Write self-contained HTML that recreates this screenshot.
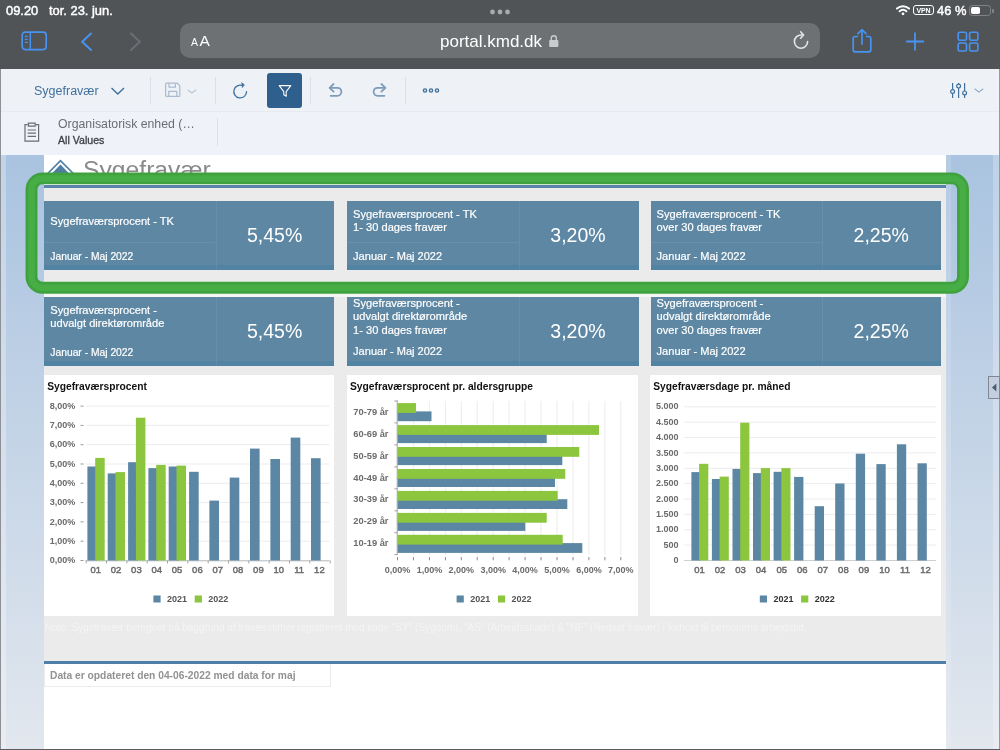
<!DOCTYPE html>
<html><head><meta charset="utf-8"><title>Sygefravær</title><style>
*{margin:0;padding:0;box-sizing:border-box}
html,body{width:1000px;height:750px;overflow:hidden;background:#fff;font-family:"Liberation Sans",sans-serif}
.abs{position:absolute}
#root{position:absolute;left:0;top:0;width:1000px;height:750px;will-change:transform;opacity:0.999}
#top{left:0;top:0;width:1000px;height:69px;background:#505457}
#url{left:180px;top:23px;width:640px;height:35px;border-radius:10px;background:#6d7174}
.t{position:absolute;white-space:nowrap;line-height:1}
#tb1{left:0;top:69px;width:1000px;height:43px;background:#eef2f7;border-bottom:1px solid #e6ebf1}
#tb2{left:0;top:112px;width:1000px;height:43px;background:#eff3f9}
.vd{position:absolute;width:1px;background:#dbe0e7}
#lstrip{left:0;top:155px;width:44px;height:595px;background:linear-gradient(#a9c3e0,#e2e7ee)}
#rstrip{left:946px;top:155px;width:54px;height:595px;background:linear-gradient(#a9c3e0,#e2e7ee)}
#content{left:44px;top:155px;width:902px;height:595px;background:#fff}
#gray{left:44px;top:187.8px;width:902px;height:475px;background:#ebebeb}
.tile{position:absolute;background:#5d87a3;color:#fff;font-size:11px}
.tile .t{color:#fff}
.val{position:absolute;color:#fff;font-size:19.5px;white-space:nowrap;line-height:1;text-align:center}
.panel{position:absolute;background:#fff}
.ct{position:absolute;font-weight:bold;font-size:10.5px;color:#111;white-space:nowrap;line-height:1}
#green{left:25.5px;top:172.5px;width:943.5px;height:121px;border:12px solid #42a842;border-radius:17px}
</style></head><body>
<div id="root">
<div id="top" class="abs">
<div class="t" style="left:6px;top:10.5px;transform:translate(0,-50%);font-size:12.9px;color:#fff;font-weight:normal;-webkit-text-stroke:0.45px #fff">09.20</div>
<div class="t" style="left:49px;top:10.5px;transform:translate(0,-50%);font-size:12.9px;color:#fff;font-weight:normal;-webkit-text-stroke:0.45px #fff">tor. 23. jun.</div>
<svg class="abs" style="left:486px;top:8px" width="28" height="8"><circle cx="6.5" cy="4" r="2.4" fill="#a9abad"/><circle cx="14" cy="4" r="2.4" fill="#a9abad"/><circle cx="21.5" cy="4" r="2.4" fill="#a9abad"/></svg>
<div id="url" class="abs"></div>
<div class="t" style="left:191px;top:42px;transform:translate(0,-50%);font-size:10.5px;color:#fff;font-weight:normal;">A</div>
<div class="t" style="left:199.5px;top:40.8px;transform:translate(0,-50%);font-size:15.5px;color:#fff;font-weight:normal;">A</div>
<div class="t" style="left:440px;top:40.5px;transform:translate(0,-50%);font-size:17px;color:#fff;font-weight:normal;">portal.kmd.dk</div>
<svg class="abs" style="left:548px;top:34px" width="12" height="14" viewBox="0 0 12 14"><rect x="1.2" y="6" width="9.2" height="7" rx="1" fill="#c9cbcc"/><path d="M3.3 6.2V4.2a2.5 2.5 0 0 1 5 0v2" fill="none" stroke="#c9cbcc" stroke-width="1.4"/></svg>
<svg class="abs" style="left:790px;top:30px" width="22" height="22" viewBox="0 0 22 22"><path d="M17.6 11.6a6.6 6.6 0 1 1-6.6-6.6h1.2" fill="none" stroke="#e4e5e6" stroke-width="1.6" stroke-linecap="round"/><path d="M10.6 1.8l3 3.2-3 3.2" fill="none" stroke="#e4e5e6" stroke-width="1.6" stroke-linecap="round" stroke-linejoin="round"/></svg>
<svg class="abs" style="left:21px;top:31px" width="28" height="20" viewBox="0 0 28 20"><rect x="1.2" y="1.2" width="24" height="17.4" rx="3" fill="none" stroke="#4893f1" stroke-width="1.7"/><path d="M9.3 1.2v17.4" stroke="#4893f1" stroke-width="1.5"/><path d="M3.8 5.4h3M3.8 8.4h3M3.8 11.4h3" stroke="#4893f1" stroke-width="1.2"/></svg>
<svg class="abs" style="left:78px;top:31px" width="18" height="22" viewBox="0 0 18 22"><path d="M13 2.5L4.2 10.8 13 19" fill="none" stroke="#4893f1" stroke-width="2" stroke-linecap="round" stroke-linejoin="round"/></svg>
<svg class="abs" style="left:126px;top:31px" width="18" height="22" viewBox="0 0 18 22"><path d="M5 2.5l8.8 8.3L5 19" fill="none" stroke="#6b6f73" stroke-width="2" stroke-linecap="round" stroke-linejoin="round"/></svg>
<svg class="abs" style="left:850px;top:27px" width="24" height="28" viewBox="0 0 24 28"><path d="M8 9.5H5.2a2 2 0 0 0-2 2v11.3a2 2 0 0 0 2 2h13.6a2 2 0 0 0 2-2V11.5a2 2 0 0 0-2-2H16" fill="none" stroke="#4893f1" stroke-width="1.7"/><path d="M12 17V3M8 6.6l4-4 4 4" fill="none" stroke="#4893f1" stroke-width="1.7" stroke-linecap="round" stroke-linejoin="round"/></svg>
<svg class="abs" style="left:904px;top:31px" width="22" height="22" viewBox="0 0 22 22"><path d="M11 2.2v16.6M2.7 10.5h16.6" stroke="#4893f1" stroke-width="1.8" stroke-linecap="round"/></svg>
<svg class="abs" style="left:957px;top:31px" width="23" height="22" viewBox="0 0 23 22"><g fill="none" stroke="#4893f1" stroke-width="1.6"><rect x="1.2" y="1.2" width="8.3" height="8" rx="1.5"/><rect x="12.6" y="1.2" width="8.3" height="8" rx="1.5"/><rect x="1.2" y="12" width="8.3" height="8" rx="1.5"/><rect x="12.6" y="12" width="8.3" height="8" rx="1.5"/></g></svg>
<svg class="abs" style="left:895px;top:4px" width="16" height="12" viewBox="0 0 16 12"><g fill="none" stroke="#fff" stroke-width="2" stroke-linecap="round"><path d="M2 4.6a8.8 8.8 0 0 1 12 0"/><path d="M4.6 7.3a5.2 5.2 0 0 1 6.8 0"/></g><circle cx="8" cy="9.8" r="1.4" fill="#fff"/></svg>
<div class="abs" style="left:913px;top:5px;width:21px;height:10px;border:1.2px solid #fff;border-radius:3px"></div>
<div class="t" style="left:923.5px;top:10.3px;transform:translate(-50%,-50%);font-size:7px;color:#fff;font-weight:bold;letter-spacing:-0.2px">VPN</div>
<div class="t" style="left:937px;top:10.5px;transform:translate(0,-50%);font-size:12.9px;color:#fff;font-weight:normal;-webkit-text-stroke:0.45px #fff">46 %</div>
<div class="abs" style="left:969px;top:5px;width:22px;height:10.5px;border:1px solid #808386;border-radius:3.2px"></div>
<div class="abs" style="left:970.5px;top:6.5px;width:9.5px;height:7.5px;background:#fff;border-radius:1.8px"></div>
<div class="abs" style="left:992px;top:8.5px;width:1.6px;height:4px;background:#808386;border-radius:0 1px 1px 0"></div>
</div>
<div id="tb1" class="abs"></div><div id="tb2" class="abs"></div>
<div class="t" style="left:34px;top:91px;transform:translate(0,-50%);font-size:12.5px;color:#41709c;font-weight:normal;">Sygefravær</div>
<svg class="abs" style="left:110px;top:86px" width="16" height="10"><path d="M1.5 2l6.3 6L14 2" fill="none" stroke="#41709c" stroke-width="1.4"/></svg>
<div class="vd" style="left:150px;top:77px;height:27px"></div>
<div class="vd" style="left:215px;top:77px;height:27px"></div>
<div class="vd" style="left:310px;top:77px;height:27px"></div>
<div class="vd" style="left:405px;top:77px;height:27px"></div>
<div class="vd" style="left:217px;top:118px;height:28px"></div>
<svg class="abs" style="left:164px;top:82px" width="18" height="16" viewBox="0 0 18 16"><g fill="none" stroke="#a9bbcf" stroke-width="1.2" stroke-linejoin="round"><path d="M2.6 1.2h10.6l2.6 2.4v9.8a1 1 0 0 1-1 1H2.6a1 1 0 0 1-1-1V2.2a1 1 0 0 1 1-1z"/><path d="M5 1.4v3.8h6.4V1.4"/><path d="M4.8 14.2V9.4h8v4.8"/></g></svg>
<svg class="abs" style="left:186px;top:88px" width="12" height="8"><path d="M1.6 1.8l4.3 3.3 4.3-3.3" fill="none" stroke="#b9c6d6" stroke-width="1.2"/></svg>
<svg class="abs" style="left:231px;top:81px" width="20" height="20" viewBox="0 0 20 20"><path d="M15.6 10.6a6.4 6.4 0 1 1-4-6" fill="none" stroke="#41709c" stroke-width="1.3" stroke-linecap="round"/><path d="M10.4 1.6l2.9 2.2-2.2 2.9" fill="#41709c" stroke="#41709c" stroke-width="0.8" stroke-linejoin="round"/></svg>
<div class="abs" style="left:267px;top:73px;width:35px;height:35px;border-radius:3px;background:#2f5f8d"></div>
<svg class="abs" style="left:277px;top:83px" width="16" height="16" viewBox="0 0 16 16"><path d="M2.2 2.6h11.6L9.2 8.6v4.6L6.8 11.8V8.6z" fill="none" stroke="#fff" stroke-width="1.05" stroke-linejoin="round"/></svg>
<svg class="abs" style="left:327px;top:82px" width="18" height="17" viewBox="0 0 18 17"><g fill="none" stroke="#7d9bbb" stroke-width="1.75" stroke-linecap="round" stroke-linejoin="round"><path d="M6.6 2L2.6 5.8l4 3.8"/><path d="M3 5.8h7.4a4 4 0 0 1 0 8H3.6"/></g></svg>
<svg class="abs" style="left:370px;top:82px" width="18" height="17" viewBox="0 0 18 17"><g fill="none" stroke="#7d9bbb" stroke-width="1.75" stroke-linecap="round" stroke-linejoin="round"><path d="M11.4 2l4 3.8-4 3.8"/><path d="M15 5.8H7.6a4 4 0 0 0 0 8h6.8"/></g></svg>
<svg class="abs" style="left:421px;top:86px" width="20" height="9"><g fill="none" stroke="#41709c" stroke-width="1.4"><circle cx="4" cy="4.5" r="1.6"/><circle cx="10" cy="4.5" r="1.6"/><circle cx="16" cy="4.5" r="1.6"/></g></svg>
<svg class="abs" style="left:949px;top:82px" width="20" height="17" viewBox="0 0 20 17"><g fill="none" stroke="#41709c" stroke-width="1.2"><path d="M3.6 1v6.6M3.6 11.4V16M9.6 1v1.2M9.6 6v10M15.6 1v8M15.6 12.8V16"/><circle cx="3.6" cy="9.5" r="1.9"/><circle cx="9.6" cy="4.1" r="1.9"/><circle cx="15.6" cy="10.9" r="1.9"/></g></svg>
<svg class="abs" style="left:973px;top:87px" width="12" height="8"><path d="M1.6 1.8l4.3 3.3 4.3-3.3" fill="none" stroke="#8fa7c2" stroke-width="1.1"/></svg>
<svg class="abs" style="left:23px;top:121px" width="18" height="22" viewBox="0 0 18 22"><g fill="none" stroke="#6a6d70" stroke-width="1.2"><path d="M4.6 3.6H2v16.6h13.6V3.6H13"/><path d="M5.4 2.2h6.8v3H5.4z"/><path d="M4.6 9h8.4M4.6 12.2h8.4M4.6 15.4h8.4"/></g></svg>
<div class="t" style="left:58px;top:123.7px;transform:translate(0,-50%);font-size:12.3px;color:#6a6d70;font-weight:normal;">Organisatorisk enhed (…</div>
<div class="t" style="left:58px;top:139.8px;transform:translate(0,-50%);font-size:10.6px;color:#3c3f42;font-weight:normal;-webkit-text-stroke:0.3px #3c3f42">All Values</div>
<div id="lstrip" class="abs"></div><div id="rstrip" class="abs"></div><div id="content" class="abs"></div>
<div class="abs" style="left:0;top:69px;width:1px;height:681px;background:#8d9196"></div>
<div class="abs" style="left:1px;top:155px;width:5px;height:595px;background:rgba(255,255,255,.28)"></div>
<div class="abs" style="left:998.8px;top:69px;width:1.2px;height:681px;background:#96999d"></div>
<div class="abs" style="left:993px;top:155px;width:5.8px;height:595px;background:rgba(255,255,255,.25)"></div>
<div class="abs" style="left:946px;top:155px;width:4.5px;height:595px;background:rgba(255,255,255,.14)"></div>
<div class="t" style="left:83px;top:170.2px;transform:translate(0,-50%);font-size:24.7px;color:#8a8a8a;font-weight:normal;">Sygefravær</div>
<svg class="abs" style="left:44px;top:158px" width="34" height="20" viewBox="0 0 34 20"><path d="M2.2 17L16.5 2.7 30.8 17" fill="none" stroke="#4d7ea3" stroke-width="1.7"/><path d="M5.5 18L16.5 6.6 27.5 18z" fill="#4d7ea3"/></svg>
<div class="abs" style="left:44px;top:184.8px;width:902px;height:2.9px;background:#5a83aa"></div>
<div id="gray" class="abs"></div>
<div class="abs" style="left:44px;top:293px;width:902px;height:3.5px;background:#f6f6f6"></div>
<div class="tile" style="left:44.3px;top:200.6px;width:290.1px;height:69.1px"></div>
<div class="abs" style="left:215.8px;top:200.6px;width:1px;height:69.1px;background:rgba(255,255,255,.07)"></div>
<div class="abs" style="left:44.3px;top:241.6px;width:171px;height:1px;background:rgba(255,255,255,.08)"></div>
<div class="abs" style="left:44.3px;top:265.09999999999997px;width:290.1px;height:4.6px;background:rgba(50,120,165,.22)"></div>
<div class="t" style="left:50.3px;top:222.2px;transform:translate(0,-50%);font-size:11.1px;color:#fff;font-weight:normal;-webkit-text-stroke:0.2px #fff">Sygefraværsprocent - TK</div>
<div class="t" style="left:50.3px;top:256.8px;transform:translate(0,-50%);font-size:10.3px;color:#fff;font-weight:normal;-webkit-text-stroke:0.2px #fff">Januar - Maj 2022</div>
<div class="t" style="left:274.6px;top:236px;transform:translate(-50%,-50%);font-size:19.5px;color:#fff;font-weight:normal;">5,45%</div>
<div class="tile" style="left:347.1px;top:200.6px;width:291.5px;height:69.1px"></div>
<div class="abs" style="left:518.6px;top:200.6px;width:1px;height:69.1px;background:rgba(255,255,255,.07)"></div>
<div class="abs" style="left:347.1px;top:241.6px;width:171px;height:1px;background:rgba(255,255,255,.08)"></div>
<div class="abs" style="left:347.1px;top:265.09999999999997px;width:291.5px;height:4.6px;background:rgba(50,120,165,.22)"></div>
<div class="t" style="left:353.1px;top:214.9px;transform:translate(0,-50%);font-size:11.1px;color:#fff;font-weight:normal;-webkit-text-stroke:0.2px #fff">Sygefraværsprocent - TK</div>
<div class="t" style="left:353.1px;top:228.2px;transform:translate(0,-50%);font-size:11.1px;color:#fff;font-weight:normal;-webkit-text-stroke:0.2px #fff">1- 30 dages fravær</div>
<div class="t" style="left:353.1px;top:256.5px;transform:translate(0,-50%);font-size:11.05px;color:#fff;font-weight:normal;-webkit-text-stroke:0.2px #fff">Januar - Maj 2022</div>
<div class="t" style="left:578px;top:236px;transform:translate(-50%,-50%);font-size:19.5px;color:#fff;font-weight:normal;">3,20%</div>
<div class="tile" style="left:650.6px;top:200.6px;width:290.6px;height:69.1px"></div>
<div class="abs" style="left:822.1px;top:200.6px;width:1px;height:69.1px;background:rgba(255,255,255,.07)"></div>
<div class="abs" style="left:650.6px;top:241.6px;width:171px;height:1px;background:rgba(255,255,255,.08)"></div>
<div class="abs" style="left:650.6px;top:265.09999999999997px;width:290.6px;height:4.6px;background:rgba(50,120,165,.22)"></div>
<div class="t" style="left:656.6px;top:214.9px;transform:translate(0,-50%);font-size:11.1px;color:#fff;font-weight:normal;-webkit-text-stroke:0.2px #fff">Sygefraværsprocent - TK</div>
<div class="t" style="left:656.6px;top:228.2px;transform:translate(0,-50%);font-size:11.1px;color:#fff;font-weight:normal;-webkit-text-stroke:0.2px #fff">over 30 dages fravær</div>
<div class="t" style="left:656.6px;top:256.5px;transform:translate(0,-50%);font-size:11.05px;color:#fff;font-weight:normal;-webkit-text-stroke:0.2px #fff">Januar - Maj 2022</div>
<div class="t" style="left:881.2px;top:236px;transform:translate(-50%,-50%);font-size:19.5px;color:#fff;font-weight:normal;">2,25%</div>
<div class="tile" style="left:44.3px;top:297.1px;width:290.1px;height:68.6px"></div>
<div class="abs" style="left:215.8px;top:297.1px;width:1px;height:68.6px;background:rgba(255,255,255,.07)"></div>
<div class="abs" style="left:44.3px;top:361.1px;width:290.1px;height:4.6px;background:rgba(50,120,165,.22)"></div>
<div class="t" style="left:50.3px;top:310.9px;transform:translate(0,-50%);font-size:11.1px;color:#fff;font-weight:normal;-webkit-text-stroke:0.2px #fff">Sygefraværsprocent -</div>
<div class="t" style="left:50.3px;top:324.3px;transform:translate(0,-50%);font-size:11.1px;color:#fff;font-weight:normal;-webkit-text-stroke:0.2px #fff">udvalgt direktørområde</div>
<div class="t" style="left:50.3px;top:352.6px;transform:translate(0,-50%);font-size:10.3px;color:#fff;font-weight:normal;-webkit-text-stroke:0.2px #fff">Januar - Maj 2022</div>
<div class="t" style="left:274.6px;top:331.5px;transform:translate(-50%,-50%);font-size:19.5px;color:#fff;font-weight:normal;">5,45%</div>
<div class="tile" style="left:347.1px;top:297.1px;width:291.5px;height:68.6px"></div>
<div class="abs" style="left:518.6px;top:297.1px;width:1px;height:68.6px;background:rgba(255,255,255,.07)"></div>
<div class="abs" style="left:347.1px;top:361.1px;width:291.5px;height:4.6px;background:rgba(50,120,165,.22)"></div>
<div class="t" style="left:353.1px;top:303.9px;transform:translate(0,-50%);font-size:11.1px;color:#fff;font-weight:normal;-webkit-text-stroke:0.2px #fff">Sygefraværsprocent -</div>
<div class="t" style="left:353.1px;top:317.4px;transform:translate(0,-50%);font-size:11.1px;color:#fff;font-weight:normal;-webkit-text-stroke:0.2px #fff">udvalgt direktørområde</div>
<div class="t" style="left:353.1px;top:331.0px;transform:translate(0,-50%);font-size:11.1px;color:#fff;font-weight:normal;-webkit-text-stroke:0.2px #fff">1- 30 dages fravær</div>
<div class="t" style="left:353.1px;top:352.0px;transform:translate(0,-50%);font-size:11.05px;color:#fff;font-weight:normal;-webkit-text-stroke:0.2px #fff">Januar - Maj 2022</div>
<div class="t" style="left:578px;top:331.5px;transform:translate(-50%,-50%);font-size:19.5px;color:#fff;font-weight:normal;">3,20%</div>
<div class="tile" style="left:650.6px;top:297.1px;width:290.6px;height:68.6px"></div>
<div class="abs" style="left:822.1px;top:297.1px;width:1px;height:68.6px;background:rgba(255,255,255,.07)"></div>
<div class="abs" style="left:650.6px;top:361.1px;width:290.6px;height:4.6px;background:rgba(50,120,165,.22)"></div>
<div class="t" style="left:656.6px;top:303.9px;transform:translate(0,-50%);font-size:11.1px;color:#fff;font-weight:normal;-webkit-text-stroke:0.2px #fff">Sygefraværsprocent -</div>
<div class="t" style="left:656.6px;top:317.4px;transform:translate(0,-50%);font-size:11.1px;color:#fff;font-weight:normal;-webkit-text-stroke:0.2px #fff">udvalgt direktørområde</div>
<div class="t" style="left:656.6px;top:331.0px;transform:translate(0,-50%);font-size:11.1px;color:#fff;font-weight:normal;-webkit-text-stroke:0.2px #fff">over 30 dages fravær</div>
<div class="t" style="left:656.6px;top:352.0px;transform:translate(0,-50%);font-size:11.05px;color:#fff;font-weight:normal;-webkit-text-stroke:0.2px #fff">Januar - Maj 2022</div>
<div class="t" style="left:881.2px;top:331.5px;transform:translate(-50%,-50%);font-size:19.5px;color:#fff;font-weight:normal;">2,25%</div>
<div class="panel" style="left:44.2px;top:374.8px;width:290.1px;height:240.8px"></div>
<div class="panel" style="left:347px;top:374.8px;width:290.7px;height:240.8px"></div>
<div class="panel" style="left:650px;top:374.8px;width:290.6px;height:240.8px"></div>
<div class="t" style="left:47.2px;top:386.6px;transform:translate(0,-50%);font-size:10.25px;color:#111;font-weight:bold;">Sygefraværsprocent</div>
<div class="t" style="left:350px;top:386.6px;transform:translate(0,-50%);font-size:10.25px;color:#111;font-weight:bold;">Sygefraværsprocent pr. aldersgruppe</div>
<div class="t" style="left:653.2px;top:386.6px;transform:translate(0,-50%);font-size:10.25px;color:#111;font-weight:bold;">Sygefraværsdage pr. måned</div>
<svg class="abs" style="left:0;top:0" width="1000" height="750" font-family="Liberation Sans, sans-serif"><path d="M80.5 560.5H83.5" stroke="#999" stroke-width="1"/><text x="75.2" y="563.1" text-anchor="end" font-size="9" fill="#6b6b6b" font-weight="bold">0,00%</text><path d="M86 541.2H329.5" stroke="#ececec" stroke-width="1"/><path d="M80.5 541.2H83.5" stroke="#999" stroke-width="1"/><text x="75.2" y="543.8000000000001" text-anchor="end" font-size="9" fill="#6b6b6b" font-weight="bold">1,00%</text><path d="M86 521.9H329.5" stroke="#ececec" stroke-width="1"/><path d="M80.5 521.9H83.5" stroke="#999" stroke-width="1"/><text x="75.2" y="524.5" text-anchor="end" font-size="9" fill="#6b6b6b" font-weight="bold">2,00%</text><path d="M86 502.6H329.5" stroke="#ececec" stroke-width="1"/><path d="M80.5 502.6H83.5" stroke="#999" stroke-width="1"/><text x="75.2" y="505.20000000000005" text-anchor="end" font-size="9" fill="#6b6b6b" font-weight="bold">3,00%</text><path d="M86 483.3H329.5" stroke="#ececec" stroke-width="1"/><path d="M80.5 483.3H83.5" stroke="#999" stroke-width="1"/><text x="75.2" y="485.90000000000003" text-anchor="end" font-size="9" fill="#6b6b6b" font-weight="bold">4,00%</text><path d="M86 464.0H329.5" stroke="#ececec" stroke-width="1"/><path d="M80.5 464.0H83.5" stroke="#999" stroke-width="1"/><text x="75.2" y="466.6" text-anchor="end" font-size="9" fill="#6b6b6b" font-weight="bold">5,00%</text><path d="M86 444.7H329.5" stroke="#ececec" stroke-width="1"/><path d="M80.5 444.7H83.5" stroke="#999" stroke-width="1"/><text x="75.2" y="447.3" text-anchor="end" font-size="9" fill="#6b6b6b" font-weight="bold">6,00%</text><path d="M86 425.4H329.5" stroke="#ececec" stroke-width="1"/><path d="M80.5 425.4H83.5" stroke="#999" stroke-width="1"/><text x="75.2" y="428.0" text-anchor="end" font-size="9" fill="#6b6b6b" font-weight="bold">7,00%</text><path d="M86 406.1H329.5" stroke="#ececec" stroke-width="1"/><path d="M80.5 406.1H83.5" stroke="#999" stroke-width="1"/><text x="75.2" y="408.70000000000005" text-anchor="end" font-size="9" fill="#6b6b6b" font-weight="bold">8,00%</text><path d="M85.5 560.8H329.5" stroke="#b4b7ba" stroke-width="1"/><path d="M86.2 560.5V563.5" stroke="#a6a6a6" stroke-width="1"/><path d="M106.5 560.5V563.5" stroke="#a6a6a6" stroke-width="1"/><path d="M126.9 560.5V563.5" stroke="#a6a6a6" stroke-width="1"/><path d="M147.2 560.5V563.5" stroke="#a6a6a6" stroke-width="1"/><path d="M167.5 560.5V563.5" stroke="#a6a6a6" stroke-width="1"/><path d="M187.8 560.5V563.5" stroke="#a6a6a6" stroke-width="1"/><path d="M208.2 560.5V563.5" stroke="#a6a6a6" stroke-width="1"/><path d="M228.5 560.5V563.5" stroke="#a6a6a6" stroke-width="1"/><path d="M248.8 560.5V563.5" stroke="#a6a6a6" stroke-width="1"/><path d="M269.2 560.5V563.5" stroke="#a6a6a6" stroke-width="1"/><path d="M289.5 560.5V563.5" stroke="#a6a6a6" stroke-width="1"/><path d="M309.8 560.5V563.5" stroke="#a6a6a6" stroke-width="1"/><path d="M330.2 560.5V563.5" stroke="#a6a6a6" stroke-width="1"/><rect x="87.4" y="466.5" width="9.8" height="94.0" fill="#5b86a4"/><rect x="95.2" y="457.9" width="9.5" height="102.6" fill="#8cc63e"/><text stroke="#6b6b6b" stroke-width="0.45" x="95.8" y="573.3" text-anchor="middle" font-size="9.5" fill="#6b6b6b" font-weight="normal">01</text><rect x="107.7" y="473.4" width="9.8" height="87.1" fill="#5b86a4"/><rect x="115.5" y="472.1" width="9.5" height="88.4" fill="#8cc63e"/><text stroke="#6b6b6b" stroke-width="0.45" x="116.1" y="573.3" text-anchor="middle" font-size="9.5" fill="#6b6b6b" font-weight="normal">02</text><rect x="128.1" y="462.2" width="9.8" height="98.3" fill="#5b86a4"/><rect x="135.9" y="417.7" width="9.5" height="142.8" fill="#8cc63e"/><text stroke="#6b6b6b" stroke-width="0.45" x="136.4" y="573.3" text-anchor="middle" font-size="9.5" fill="#6b6b6b" font-weight="normal">03</text><rect x="148.4" y="468.1" width="9.8" height="92.4" fill="#5b86a4"/><rect x="156.2" y="464.9" width="9.5" height="95.6" fill="#8cc63e"/><text stroke="#6b6b6b" stroke-width="0.45" x="156.8" y="573.3" text-anchor="middle" font-size="9.5" fill="#6b6b6b" font-weight="normal">04</text><rect x="168.7" y="466.5" width="9.8" height="94.0" fill="#5b86a4"/><rect x="176.5" y="465.6" width="9.5" height="94.9" fill="#8cc63e"/><text stroke="#6b6b6b" stroke-width="0.45" x="177.1" y="573.3" text-anchor="middle" font-size="9.5" fill="#6b6b6b" font-weight="normal">05</text><rect x="189.1" y="471.8" width="9.6" height="88.7" fill="#5b86a4"/><text stroke="#6b6b6b" stroke-width="0.45" x="197.4" y="573.3" text-anchor="middle" font-size="9.5" fill="#6b6b6b" font-weight="normal">06</text><rect x="209.4" y="500.6" width="9.6" height="59.9" fill="#5b86a4"/><text stroke="#6b6b6b" stroke-width="0.45" x="217.7" y="573.3" text-anchor="middle" font-size="9.5" fill="#6b6b6b" font-weight="normal">07</text><rect x="229.7" y="477.6" width="9.6" height="82.9" fill="#5b86a4"/><text stroke="#6b6b6b" stroke-width="0.45" x="238.1" y="573.3" text-anchor="middle" font-size="9.5" fill="#6b6b6b" font-weight="normal">08</text><rect x="250.0" y="448.6" width="9.6" height="111.9" fill="#5b86a4"/><text stroke="#6b6b6b" stroke-width="0.45" x="258.4" y="573.3" text-anchor="middle" font-size="9.5" fill="#6b6b6b" font-weight="normal">09</text><rect x="270.4" y="459" width="9.6" height="101.5" fill="#5b86a4"/><text stroke="#6b6b6b" stroke-width="0.45" x="278.7" y="573.3" text-anchor="middle" font-size="9.5" fill="#6b6b6b" font-weight="normal">10</text><rect x="290.7" y="437.6" width="9.6" height="122.9" fill="#5b86a4"/><text stroke="#6b6b6b" stroke-width="0.45" x="299.1" y="573.3" text-anchor="middle" font-size="9.5" fill="#6b6b6b" font-weight="normal">11</text><rect x="311.0" y="458.2" width="9.6" height="102.3" fill="#5b86a4"/><text stroke="#6b6b6b" stroke-width="0.45" x="319.4" y="573.3" text-anchor="middle" font-size="9.5" fill="#6b6b6b" font-weight="normal">12</text><rect x="153.4" y="595.5" width="7.2" height="7" fill="#5b86a4"/><text x="167.1" y="602.2" text-anchor="start" font-size="9" fill="#555" font-weight="bold">2021</text><rect x="194.7" y="595.5" width="7.2" height="7" fill="#8cc63e"/><text x="208.3" y="602.2" text-anchor="start" font-size="9" fill="#555" font-weight="bold">2022</text><path d="M413.4 401V555" stroke="#ececec" stroke-width="1"/><path d="M429.4 401V555" stroke="#ececec" stroke-width="1"/><path d="M445.4 401V555" stroke="#ececec" stroke-width="1"/><path d="M461.3 401V555" stroke="#ececec" stroke-width="1"/><path d="M477.2 401V555" stroke="#ececec" stroke-width="1"/><path d="M493.2 401V555" stroke="#ececec" stroke-width="1"/><path d="M509.1 401V555" stroke="#ececec" stroke-width="1"/><path d="M525.1 401V555" stroke="#ececec" stroke-width="1"/><path d="M541.0 401V555" stroke="#ececec" stroke-width="1"/><path d="M557.0 401V555" stroke="#ececec" stroke-width="1"/><path d="M573.0 401V555" stroke="#ececec" stroke-width="1"/><path d="M588.9 401V555" stroke="#ececec" stroke-width="1"/><path d="M604.9 401V555" stroke="#ececec" stroke-width="1"/><path d="M620.8 401V555" stroke="#ececec" stroke-width="1"/><rect x="397.5" y="411.4" width="34.0" height="9.8" fill="#5b86a4"/><rect x="397.5" y="403.1" width="18.5" height="9.8" fill="#8cc63e"/><text x="353.3" y="414.6" text-anchor="start" font-size="9.3" fill="#6b6b6b" font-weight="bold">70-79 år</text><rect x="397.5" y="433.3" width="149.2" height="9.8" fill="#5b86a4"/><rect x="397.5" y="425.1" width="201.5" height="9.8" fill="#8cc63e"/><text x="353.3" y="436.6" text-anchor="start" font-size="9.3" fill="#6b6b6b" font-weight="bold">60-69 år</text><rect x="397.5" y="455.3" width="164.8" height="9.8" fill="#5b86a4"/><rect x="397.5" y="447.0" width="181.8" height="9.8" fill="#8cc63e"/><text x="353.3" y="458.5" text-anchor="start" font-size="9.3" fill="#6b6b6b" font-weight="bold">50-59 år</text><rect x="397.5" y="477.2" width="157.5" height="9.8" fill="#5b86a4"/><rect x="397.5" y="469.0" width="167.8" height="9.8" fill="#8cc63e"/><text x="353.3" y="480.5" text-anchor="start" font-size="9.3" fill="#6b6b6b" font-weight="bold">40-49 år</text><rect x="397.5" y="499.2" width="169.8" height="9.8" fill="#5b86a4"/><rect x="397.5" y="490.9" width="160.2" height="9.8" fill="#8cc63e"/><text x="353.3" y="502.4" text-anchor="start" font-size="9.3" fill="#6b6b6b" font-weight="bold">30-39 år</text><rect x="397.5" y="521.1" width="127.8" height="9.8" fill="#5b86a4"/><rect x="397.5" y="512.9" width="149.2" height="9.8" fill="#8cc63e"/><text x="353.3" y="524.4" text-anchor="start" font-size="9.3" fill="#6b6b6b" font-weight="bold">20-29 år</text><rect x="397.5" y="543.1" width="184.8" height="9.8" fill="#5b86a4"/><rect x="397.5" y="534.8" width="165.2" height="9.8" fill="#8cc63e"/><text x="353.3" y="546.3" text-anchor="start" font-size="9.3" fill="#6b6b6b" font-weight="bold">10-19 år</text><path d="M394.3 401.0H397.5" stroke="#9c9c9c" stroke-width="0.9"/><path d="M394.3 422.9H397.5" stroke="#9c9c9c" stroke-width="0.9"/><path d="M394.3 444.9H397.5" stroke="#9c9c9c" stroke-width="0.9"/><path d="M394.3 466.9H397.5" stroke="#9c9c9c" stroke-width="0.9"/><path d="M394.3 488.8H397.5" stroke="#9c9c9c" stroke-width="0.9"/><path d="M394.3 510.8H397.5" stroke="#9c9c9c" stroke-width="0.9"/><path d="M394.3 532.7H397.5" stroke="#9c9c9c" stroke-width="0.9"/><path d="M394.3 554.6H397.5" stroke="#9c9c9c" stroke-width="0.9"/><path d="M397.2 400.5V555" stroke="#9c9c9c" stroke-width="0.9"/><path d="M397.5 557V560.3" stroke="#8c8c8c" stroke-width="1"/><path d="M413.4 557V560.3" stroke="#8c8c8c" stroke-width="1"/><path d="M429.4 557V560.3" stroke="#8c8c8c" stroke-width="1"/><path d="M445.4 557V560.3" stroke="#8c8c8c" stroke-width="1"/><path d="M461.3 557V560.3" stroke="#8c8c8c" stroke-width="1"/><path d="M477.2 557V560.3" stroke="#8c8c8c" stroke-width="1"/><path d="M493.2 557V560.3" stroke="#8c8c8c" stroke-width="1"/><path d="M509.1 557V560.3" stroke="#8c8c8c" stroke-width="1"/><path d="M525.1 557V560.3" stroke="#8c8c8c" stroke-width="1"/><path d="M541.0 557V560.3" stroke="#8c8c8c" stroke-width="1"/><path d="M557.0 557V560.3" stroke="#8c8c8c" stroke-width="1"/><path d="M573.0 557V560.3" stroke="#8c8c8c" stroke-width="1"/><path d="M588.9 557V560.3" stroke="#8c8c8c" stroke-width="1"/><path d="M604.9 557V560.3" stroke="#8c8c8c" stroke-width="1"/><path d="M620.8 557V560.3" stroke="#8c8c8c" stroke-width="1"/><text x="397.5" y="573.2" text-anchor="middle" font-size="9" fill="#6b6b6b" font-weight="bold">0,00%</text><text x="429.4" y="573.2" text-anchor="middle" font-size="9" fill="#6b6b6b" font-weight="bold">1,00%</text><text x="461.3" y="573.2" text-anchor="middle" font-size="9" fill="#6b6b6b" font-weight="bold">2,00%</text><text x="493.2" y="573.2" text-anchor="middle" font-size="9" fill="#6b6b6b" font-weight="bold">3,00%</text><text x="525.1" y="573.2" text-anchor="middle" font-size="9" fill="#6b6b6b" font-weight="bold">4,00%</text><text x="557.0" y="573.2" text-anchor="middle" font-size="9" fill="#6b6b6b" font-weight="bold">5,00%</text><text x="588.9" y="573.2" text-anchor="middle" font-size="9" fill="#6b6b6b" font-weight="bold">6,00%</text><text x="620.8" y="573.2" text-anchor="middle" font-size="9" fill="#6b6b6b" font-weight="bold">7,00%</text><rect x="456.6" y="595.5" width="7.2" height="7" fill="#5b86a4"/><text x="470.3" y="602.2" text-anchor="start" font-size="9" fill="#555" font-weight="bold">2021</text><rect x="497.90000000000003" y="595.5" width="7.2" height="7" fill="#8cc63e"/><text x="511.5" y="602.2" text-anchor="start" font-size="9" fill="#555" font-weight="bold">2022</text><path d="M684 560.5H936" stroke="#cfcfcf" stroke-width="1"/><text x="678.6" y="563.1" text-anchor="end" font-size="9" fill="#6b6b6b" font-weight="bold">0</text><path d="M684 545.1H936" stroke="#ececec" stroke-width="1"/><text x="678.6" y="547.73" text-anchor="end" font-size="9" fill="#6b6b6b" font-weight="bold">500</text><path d="M684 529.8H936" stroke="#ececec" stroke-width="1"/><text x="678.6" y="532.36" text-anchor="end" font-size="9" fill="#6b6b6b" font-weight="bold">1.000</text><path d="M684 514.4H936" stroke="#ececec" stroke-width="1"/><text x="678.6" y="516.99" text-anchor="end" font-size="9" fill="#6b6b6b" font-weight="bold">1.500</text><path d="M684 499.0H936" stroke="#ececec" stroke-width="1"/><text x="678.6" y="501.62" text-anchor="end" font-size="9" fill="#6b6b6b" font-weight="bold">2.000</text><path d="M684 483.6H936" stroke="#ececec" stroke-width="1"/><text x="678.6" y="486.25" text-anchor="end" font-size="9" fill="#6b6b6b" font-weight="bold">2.500</text><path d="M684 468.3H936" stroke="#ececec" stroke-width="1"/><text x="678.6" y="470.88" text-anchor="end" font-size="9" fill="#6b6b6b" font-weight="bold">3.000</text><path d="M684 452.9H936" stroke="#ececec" stroke-width="1"/><text x="678.6" y="455.51000000000005" text-anchor="end" font-size="9" fill="#6b6b6b" font-weight="bold">3.500</text><path d="M684 437.5H936" stroke="#ececec" stroke-width="1"/><text x="678.6" y="440.14000000000004" text-anchor="end" font-size="9" fill="#6b6b6b" font-weight="bold">4.000</text><path d="M684 422.2H936" stroke="#ececec" stroke-width="1"/><text x="678.6" y="424.77000000000004" text-anchor="end" font-size="9" fill="#6b6b6b" font-weight="bold">4.500</text><path d="M684 406.8H936" stroke="#ececec" stroke-width="1"/><text x="678.6" y="409.40000000000003" text-anchor="end" font-size="9" fill="#6b6b6b" font-weight="bold">5.000</text><rect x="691.4" y="472.1" width="9.3" height="88.4" fill="#5b86a4"/><rect x="699.1" y="463.8" width="9.2" height="96.7" fill="#8cc63e"/><text stroke="#6b6b6b" stroke-width="0.45" x="699.5" y="573.3" text-anchor="middle" font-size="9.5" fill="#6b6b6b" font-weight="normal">01</text><rect x="711.9" y="479" width="9.3" height="81.5" fill="#5b86a4"/><rect x="719.6" y="476.6" width="9.2" height="83.9" fill="#8cc63e"/><text stroke="#6b6b6b" stroke-width="0.45" x="720.0" y="573.3" text-anchor="middle" font-size="9.5" fill="#6b6b6b" font-weight="normal">02</text><rect x="732.5" y="468.9" width="9.3" height="91.6" fill="#5b86a4"/><rect x="740.2" y="422.7" width="9.2" height="137.8" fill="#8cc63e"/><text stroke="#6b6b6b" stroke-width="0.45" x="740.6" y="573.3" text-anchor="middle" font-size="9.5" fill="#6b6b6b" font-weight="normal">03</text><rect x="753.0" y="473.1" width="9.3" height="87.4" fill="#5b86a4"/><rect x="760.8" y="468.1" width="9.2" height="92.4" fill="#8cc63e"/><text stroke="#6b6b6b" stroke-width="0.45" x="761.1" y="573.3" text-anchor="middle" font-size="9.5" fill="#6b6b6b" font-weight="normal">04</text><rect x="773.6" y="471.8" width="9.3" height="88.7" fill="#5b86a4"/><rect x="781.3" y="468.1" width="9.2" height="92.4" fill="#8cc63e"/><text stroke="#6b6b6b" stroke-width="0.45" x="781.7" y="573.3" text-anchor="middle" font-size="9.5" fill="#6b6b6b" font-weight="normal">05</text><rect x="794.1" y="476.9" width="9.3" height="83.6" fill="#5b86a4"/><text stroke="#6b6b6b" stroke-width="0.45" x="802.2" y="573.3" text-anchor="middle" font-size="9.5" fill="#6b6b6b" font-weight="normal">06</text><rect x="814.7" y="506.2" width="9.3" height="54.3" fill="#5b86a4"/><text stroke="#6b6b6b" stroke-width="0.45" x="822.8" y="573.3" text-anchor="middle" font-size="9.5" fill="#6b6b6b" font-weight="normal">07</text><rect x="835.2" y="483.5" width="9.3" height="77.0" fill="#5b86a4"/><text stroke="#6b6b6b" stroke-width="0.45" x="843.4" y="573.3" text-anchor="middle" font-size="9.5" fill="#6b6b6b" font-weight="normal">08</text><rect x="855.8" y="453.7" width="9.3" height="106.8" fill="#5b86a4"/><text stroke="#6b6b6b" stroke-width="0.45" x="863.9" y="573.3" text-anchor="middle" font-size="9.5" fill="#6b6b6b" font-weight="normal">09</text><rect x="876.4" y="464.1" width="9.3" height="96.4" fill="#5b86a4"/><text stroke="#6b6b6b" stroke-width="0.45" x="884.5" y="573.3" text-anchor="middle" font-size="9.5" fill="#6b6b6b" font-weight="normal">10</text><rect x="896.9" y="444.3" width="9.3" height="116.2" fill="#5b86a4"/><text stroke="#6b6b6b" stroke-width="0.45" x="905.0" y="573.3" text-anchor="middle" font-size="9.5" fill="#6b6b6b" font-weight="normal">11</text><rect x="917.5" y="463.3" width="9.3" height="97.2" fill="#5b86a4"/><text stroke="#6b6b6b" stroke-width="0.45" x="925.5" y="573.3" text-anchor="middle" font-size="9.5" fill="#6b6b6b" font-weight="normal">12</text><rect x="759.8" y="595.5" width="7.2" height="7" fill="#5b86a4"/><text x="773.5" y="602.2" text-anchor="start" font-size="9" fill="#333" font-weight="bold">2021</text><rect x="801.0999999999999" y="595.5" width="7.2" height="7" fill="#8cc63e"/><text x="814.6999999999999" y="602.2" text-anchor="start" font-size="9" fill="#333" font-weight="bold">2022</text></svg>
<div class="t" style="left:45px;top:628px;transform:translate(0,-50%);font-size:10px;color:#f4f4f4;font-weight:normal;">Note: Sygefravær beregnet på baggrund af fraværstimer registreret med kode "SY" (Sygdom), "AS" (Arbejdsskade) &amp; "NF" (Nedsat fravær) i forhold til personens arbejdstid.</div>
<div class="abs" style="left:44px;top:661px;width:902px;height:2.6px;background:#4f7ea8"></div>
<div class="abs" style="left:44px;top:663.6px;width:902px;height:86px;background:#fff"></div>
<div class="abs" style="left:44px;top:663.6px;width:287px;height:23.4px;border:1px solid #ececec;border-top:none"></div>
<div class="t" style="left:50px;top:676.2px;transform:translate(0,-50%);font-size:10.25px;color:#929292;font-weight:bold;">Data er opdateret den 04-06-2022 med data for maj</div>
<div class="abs" style="left:988px;top:375.5px;width:12px;height:23.5px;background:#c3cfdf;border:1px solid #7e8792"></div>
<svg class="abs" style="left:991px;top:383px" width="7" height="9"><path d="M5.4 0.6v7.8L1 4.5z" fill="#4a5a70"/></svg>
<svg class="abs" style="left:0;top:0" width="1000" height="750"><rect x="31.5" y="178.4" width="931.5" height="109.3" rx="11" fill="none" stroke="#3fa23e" stroke-width="11.9"/><rect x="31.5" y="178.4" width="931.5" height="109.3" rx="11" fill="none" stroke="#47ad45" stroke-width="6.5"/></svg>
<div class="abs" style="left:0;top:748.6px;width:1000px;height:1.4px;background:#5a5d60"></div>
</div>
</body></html>
